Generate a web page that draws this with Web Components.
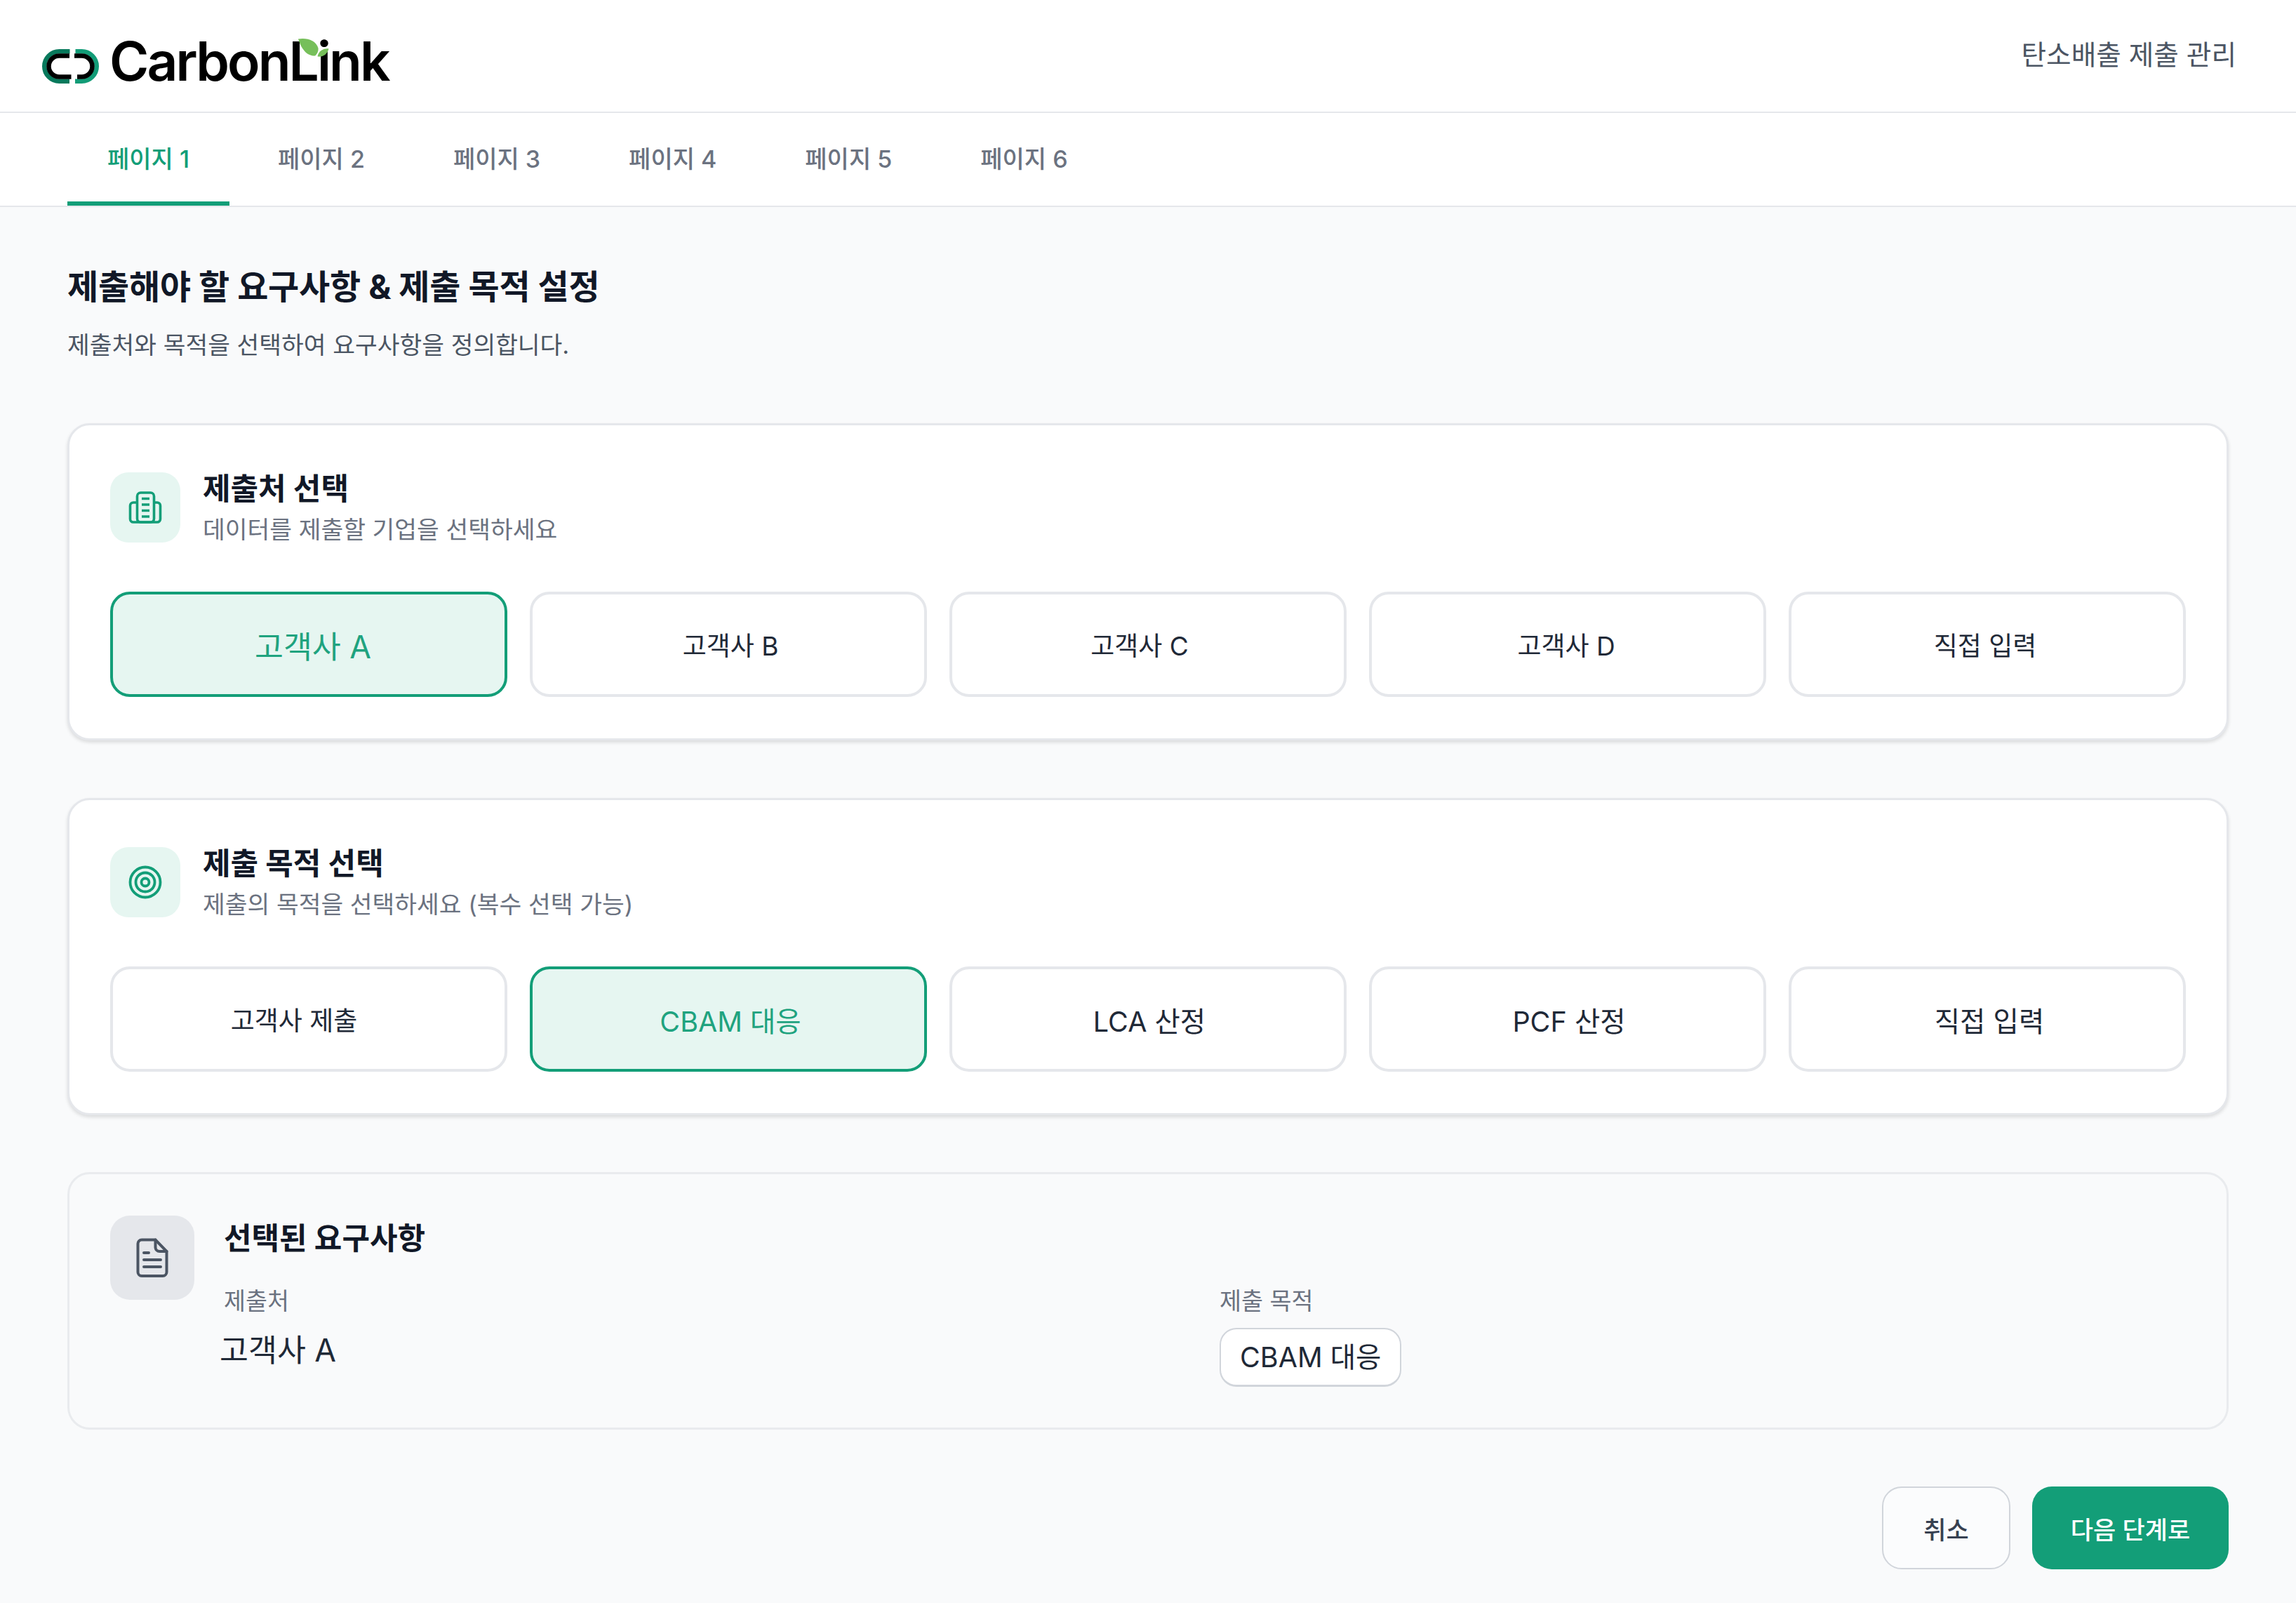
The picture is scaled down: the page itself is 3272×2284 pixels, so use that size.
<!DOCTYPE html>
<html lang="ko"><head><meta charset="utf-8"><title>CarbonLink</title>
<style>
html,body{margin:0;padding:0;background:#f9fafb}
body{width:3272px;height:2284px;overflow:hidden;font-family:Inter,"Noto Sans CJK KR",sans-serif;color:#111827}
</style></head><body>
<cl-app></cl-app>
<script>
function def(name, html, props){
  customElements.define(name, class extends HTMLElement{
    connectedCallback(){
      if(this.shadowRoot) return;
      const r=this.attachShadow({mode:'open'});
      r.innerHTML=typeof html==='function'?html(this):html;
    }
  });
}
const ICONS={
 building:`<svg width="48" height="48" viewBox="0 0 48 48" fill="none" stroke="#139e78" stroke-width="3.6"><rect x="12.5" y="3" width="24" height="42" rx="5"/><path d="M12.5 17H7a4.5 4.5 0 0 0-4.500 4.500V40.500A4.500 4.500 0 0 0 7 45h34a4.500 4.500 0 0 0 4.500-4.500V21.500A4.500 4.500 0 0 0 41 17h-4.500"/><path d="M19 11.500h11M19 20h11M19 28.500h11M19 37h11"/></svg>`,
 target:`<svg width="48" height="48" viewBox="0 0 48 48" fill="none" stroke="#139e78" stroke-width="3.800"><circle cx="24" cy="24" r="21.500"/><circle cx="24" cy="24" r="13.500"/><circle cx="24" cy="24" r="5.500"/></svg>`,
 doc:`<svg width="46" height="56" viewBox="0 0 46 56" fill="none" stroke="#4b5563" stroke-width="4" stroke-linecap="round"><path d="M8 2.500H27.500L43.500 19V48.500a5.500 5.500 0 0 1-5.500 5.500H8a5.500 5.500 0 0 1-5.500-5.500V8A5.500 5.500 0 0 1 8 2.500Z"/><path d="M27.500 2.500V13a6 6 0 0 0 6 6H43.500"/><path d="M11 21h7M11 31h24M11 41h24"/></svg>`
};
def('cl-logo',`<style>
:host{display:block;position:relative;height:80px}
.row{display:flex;align-items:center;gap:15px;height:100%}
.t{font:600 76.500px/80px Inter,sans-serif;letter-spacing:-2.900px;color:#000;white-space:nowrap}
.leaf{position:absolute;left:0;top:0;pointer-events:none}
</style><div class="row"><svg width="81" height="49" viewBox="0 0 81 49" fill="none" stroke-width="6.500" style="margin-top:15px">
<path d="M39.500 3.250H24.500a21.250 21.250 0 0 0 0 42.500H39" stroke="#08795c"/><path d="M39 9.500H24.500a15 15 0 0 0 0 30H41.500" stroke="#000"/>
<path d="M47.500 3.250H56.500a21.250 21.250 0 0 1 0 42.500H47" stroke="#129c77"/><path d="M46 9.500H56.500a15 15 0 0 1 0 30H50" stroke="#000"/>
</svg><span class="t">CarbonLink</span></div>
<svg class="leaf" width="520" height="80" viewBox="0 0 520 80"><rect x="375" y="6" width="20" height="21" fill="#fff"/><path d="M365 8.500C377 6.500 390 10 393.500 21.500 394 26 392 30 389 32.500 376 33 369 21 365 8.500Z" fill="#76bf5a"/><path d="M408.500 22.500C403 21.500 394.500 24 392.500 33.500 400 34.500 406 31 408.500 22.500Z" fill="#76bf5a"/></svg>`);
def('cl-header',`<style>
:host{display:flex;justify-content:space-between;box-sizing:border-box;height:161px;padding:0 85px 0 60px;background:#fff;border-bottom:2px solid #e5e7eb}
.l{margin-top:47px}
.r{font-size:38.700px;line-height:50px;margin-top:53px;color:#4b5563;white-space:nowrap}
</style><div class="l"><cl-logo></cl-logo></div><div class="r"><slot></slot></div>`);
def('cl-tab',t=>`<style>
:host{display:block;box-sizing:border-box;height:132px;padding:0 57px;font-size:34px;line-height:132px;font-weight:500;white-space:nowrap;margin-bottom:0;color:${t.hasAttribute('active')?'#139e78':'#6b7280'};${t.hasAttribute('active')?'border-bottom:6px solid #139e78;':''}}
</style><slot></slot>`);
def('cl-tabs',`<style>
:host{display:flex;gap:12px;box-sizing:border-box;height:134px;padding:0 96px;background:#fff;border-bottom:2px solid #e5e7eb}
</style><slot></slot>`);
def('cl-page-title',`<style>
:host{display:block;padding-top:84px}
h1{margin:0;font-size:48px;line-height:60px;font-weight:700;color:#111827;letter-spacing:-.2px}
p{margin:31px 0 0;font-size:34.500px;line-height:44px;color:#4b5563}
</style><h1><slot name="title"></slot></h1><p><slot name="sub"></slot></p>`);
def('cl-card',t=>`<style>
:host{display:block;box-sizing:border-box;height:452px;margin-top:var(--mt,82px);padding:67px 58px 59px;background:#fff;border:3px solid #e5e7eb;border-radius:32px;box-shadow:0 3px 5px rgba(0,0,0,.12)}
.head{display:flex;gap:32px;height:100px}
.ic{width:100px;height:100px;border-radius:26px;background:#e6f6f1;display:flex;align-items:center;justify-content:center}
h2{margin:0;font-size:43px;line-height:46px;font-weight:700;color:#111827}
p{margin:18px 0 0;font-size:34.500px;line-height:36px;color:#6b7280}
.opts{display:grid;grid-template-columns:repeat(5,566px);gap:32px;margin-top:70px}
</style><div class="head"><div class="ic">${ICONS[t.getAttribute('icon')]}</div><div><h2>${t.getAttribute('heading')}</h2><p>${t.getAttribute('sub')}</p></div></div><div class="opts"><slot></slot></div>`);
def('cl-choice',t=>{const sel=t.hasAttribute('selected'),s=+(t.getAttribute('shift')||0),fs=t.getAttribute('fs')||37;return `<style>
:host{display:flex;box-sizing:border-box;height:150px;align-items:center;justify-content:center;padding-right:${s>0?2*s:0}px;padding-left:${s<0?-2*s:0}px;border:4px solid ${sel?'#139e78':'#e5e7eb'};border-radius:28px;background:${sel?'#e6f6f1':'#fff'};color:${sel?'#1fa37f':'#1f2937'};font-size:${fs}px;white-space:nowrap}
</style><slot></slot>`});
def('cl-chip',`<style>
:host{display:inline-block;box-sizing:border-box;height:84px;padding:0 27px;line-height:80px;font-size:39.500px;color:#1f2937;background:#fff;border:2px solid #d1d5db;border-bottom-width:3px;border-radius:24px;white-space:nowrap}
</style><slot></slot>`);
def('cl-summary',`<style>
:host{display:flex;gap:42px;box-sizing:border-box;height:367px;margin-top:81px;padding:59px 58px;background:#f9fafb;border:3px solid #e9ebee;border-radius:32px}
.ic{flex:none;width:120px;height:120px;border-radius:28px;background:#e5e7eb;display:flex;align-items:center;justify-content:center}
.b{flex:1;padding-top:9px}
h3{margin:0;font-size:43px;line-height:46px;font-weight:700;color:#111827}
.g{display:grid;grid-template-columns:1fr 1fr;gap:42px;margin-top:47px}
</style><div class="ic">${ICONS.doc}</div><div class="b"><h3><slot name="title"></slot></h3><div class="g"><slot></slot></div></div>`);
def('cl-field',t=>`<style>
:host{display:block}
.lb{font-size:33.700px;line-height:40px;color:#6b7280;white-space:nowrap}
.v{margin:22px 0 0 -6px;font-size:44.500px;line-height:56px;color:#1f2937;white-space:nowrap}
.c{margin-top:18px}
</style><div class="lb">${t.getAttribute('label')}</div>${t.hasAttribute('chip')?'<div class="c"><slot></slot></div>':'<div class="v"><slot></slot></div>'}`);
def('cl-btn',t=>{const p=t.hasAttribute('primary');return `<style>
:host{display:flex;box-sizing:border-box;height:118px;width:${t.getAttribute('w')}px;align-items:center;justify-content:center;font-size:35px;font-weight:500;border-radius:28px;white-space:nowrap;${p?'background:#139e78;color:#fff;':'background:#fbfcfd;color:#374151;border:2.500px solid #d1d5db;'}}
</style><slot></slot>`});
def('cl-actions',`<style>:host{display:flex;justify-content:flex-end;gap:31px;margin-top:81px}</style><slot></slot>`);
def('cl-main',`<style>:host{display:block;padding:0 96px}</style><slot></slot>`);
def('cl-app',`<style>:host{display:block}</style>
<cl-header>탄소배출 제출 관리</cl-header>
<cl-tabs><cl-tab active>페이지 1</cl-tab><cl-tab>페이지 2</cl-tab><cl-tab>페이지 3</cl-tab><cl-tab>페이지 4</cl-tab><cl-tab>페이지 5</cl-tab><cl-tab>페이지 6</cl-tab></cl-tabs>
<cl-main>
<cl-page-title><span slot="title">제출해야 할 요구사항 &amp; 제출 목적 설정</span><span slot="sub">제출처와 목적을 선택하여 요구사항을 정의합니다.</span></cl-page-title>
<cl-card style="--mt:89px" icon="building" heading="제출처 선택" sub="데이터를 제출할 기업을 선택하세요">
<cl-choice selected fs="44.500" shift="-6">고객사 A</cl-choice><cl-choice shift="-3">고객사 B</cl-choice><cl-choice shift="12">고객사 C</cl-choice><cl-choice shift="2">고객사 D</cl-choice><cl-choice shift="3">직접 입력</cl-choice>
</cl-card>
<cl-card icon="target" heading="제출 목적 선택" sub="제출의 목적을 선택하세요 (복수 선택 가능)">
<cl-choice shift="21">고객사 제출</cl-choice><cl-choice fs="39.500" selected shift="-3">CBAM 대응</cl-choice><cl-choice fs="39.500" shift="-2">LCA 산정</cl-choice><cl-choice fs="39.500" shift="-2">PCF 산정</cl-choice><cl-choice fs="39.500" shift="-3">직접 입력</cl-choice>
</cl-card>
<cl-summary><span slot="title">선택된 요구사항</span>
<cl-field label="제출처">고객사 A</cl-field><cl-field label="제출 목적" chip><cl-chip>CBAM 대응</cl-chip></cl-field>
</cl-summary>
<cl-actions><cl-btn w="183">취소</cl-btn><cl-btn primary w="280">다음 단계로</cl-btn></cl-actions>
</cl-main>`);
</script></body></html>
